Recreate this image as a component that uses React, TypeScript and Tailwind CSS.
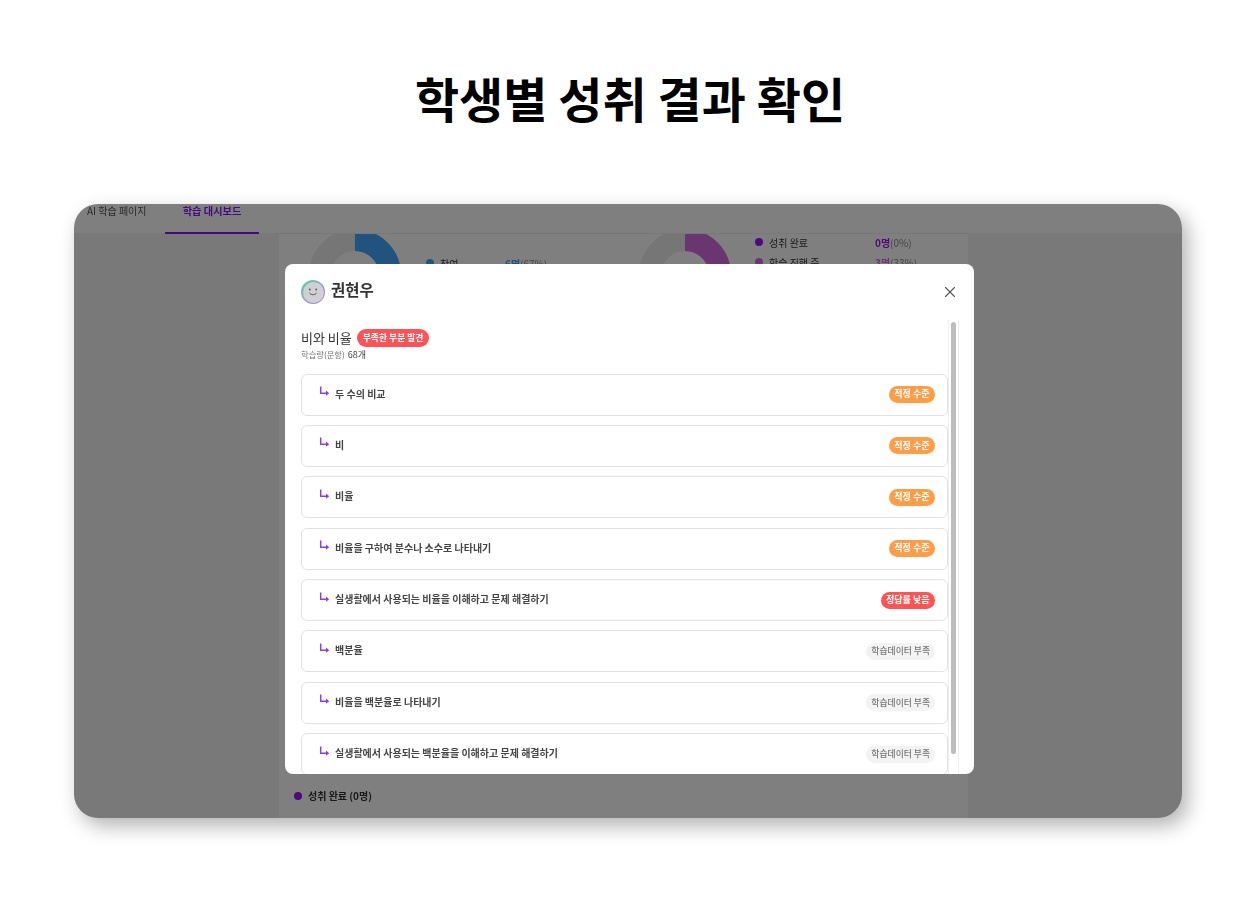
import React from "react";
import { X } from "lucide-react";

type Level = "ok" | "low" | "none";

const rows: { name: string; level: Level }[] = [
  { name: "두 수의 비교", level: "ok" },
  { name: "비", level: "ok" },
  { name: "비율", level: "ok" },
  { name: "비율을 구하여 분수나 소수로 나타내기", level: "ok" },
  { name: "실생활에서 사용되는 비율을 이해하고 문제 해결하기", level: "low" },
  { name: "백분율", level: "none" },
  { name: "비율을 백분율로 나타내기", level: "none" },
  { name: "실생활에서 사용되는 백분율을 이해하고 문제 해결하기", level: "none" },
];

const Badge = ({ level }: { level: Level }) => {
  if (level === "ok") {
    return (
      <span className="flex h-[17px] items-center rounded-full bg-[#ff9d47] px-[5.5px] pb-[1px] text-[9px] font-bold text-white">
        적정 수준
      </span>
    );
  }
  if (level === "low") {
    return (
      <span className="flex h-[17px] items-center rounded-full bg-[#ff5252] px-[5.5px] pb-[1px] text-[9px] font-bold text-white">
        정답률 낮음
      </span>
    );
  }
  return (
    <span className="flex h-[17px] items-center rounded-full bg-[#f3f3f3] px-[5px] pb-[1px] text-[8.8px] font-medium text-[#777777]">
      학습데이터 부족
    </span>
  );
};

const ChildArrow = () => (
  <svg width="11" height="11" viewBox="0 0 11 11" fill="none" className="mb-[3px] shrink-0">
    <path d="M1.7 0.5 V7.2 H8" stroke="#8f3de0" strokeWidth="1.5" />
    <path d="M7 4.6 L10.2 7.2 L7 9.8 Z" fill="#8f3de0" />
  </svg>
);

const Donut = ({ color, percent }: { color: string; percent: number }) => {
  const c = 2 * Math.PI * 35;
  return (
    <svg width="92" height="92" viewBox="0 0 92 92" className="shrink-0">
      <circle cx="46" cy="46" r="35" fill="none" stroke="#ececec" strokeWidth="22" />
      <circle
        cx="46"
        cy="46"
        r="35"
        fill="none"
        stroke={color}
        strokeWidth="22"
        strokeDasharray={`${(c * percent) / 100} ${c}`}
        transform="rotate(-90 46 46)"
      />
    </svg>
  );
};

const LegendRow = ({
  dot,
  label,
  count,
  rate,
  countClass,
  labelWidth,
}: {
  dot: string;
  label: string;
  count: string;
  rate: string;
  countClass: string;
  labelWidth: string;
}) => (
  <div className="flex h-[20px] items-center text-[10px] text-[#333333]">
    <span className={`mr-[6px] h-[8px] w-[8px] rounded-full ${dot}`} />
    <span className={labelWidth}>{label}</span>
    <span className={`font-bold ${countClass}`}>{count}</span>
    <span className="text-[#888888]">{rate}</span>
  </div>
);

const Avatar = () => (
  <div className="flex h-[24px] w-[24px] items-center justify-center rounded-full bg-gradient-to-br from-[#3fd6a0] to-[#b06ae8]">
    <div className="flex h-[21px] w-[21px] items-center justify-center rounded-full bg-[#cfcfd4]">
      <svg width="14" height="10" viewBox="0 0 14 10" fill="none">
        <circle cx="3.8" cy="2.5" r="0.9" fill="#555555" />
        <circle cx="10.2" cy="2.5" r="0.9" fill="#555555" />
        <path d="M3.5 6 C5 8.4 9 8.4 10.5 6" stroke="#555555" strokeWidth="0.9" strokeLinecap="round" />
      </svg>
    </div>
  </div>
);

const Modal = () => (
  <div className="flex h-[510px] w-[689px] flex-col overflow-hidden rounded-[8px] bg-white">
    <div className="flex h-[56px] shrink-0 items-center justify-between pl-[16px] pr-[15px]">
      <div className="flex items-center gap-[6px]">
        <Avatar />
        <span className="mb-[4px] text-[15.5px] font-bold text-[#333333]">권현우</span>
      </div>
      <X size={18} strokeWidth={1.5} className="text-[#555555]" />
    </div>
    <div className="flex min-h-0 flex-1 pl-[16px] pr-[15px]">
      <div className="min-w-0 flex-1">
        <div className="mt-[9px] flex h-[18px] items-center gap-[5.5px]">
          <span className="text-[13px] text-[#333333]">비와 비율</span>
          <span className="flex h-[18px] items-center rounded-full bg-[#ff5257] px-[5.5px] text-[8.8px] font-bold text-white">
            부족한 부분 발견
          </span>
        </div>
        <div className="mt-[1px] flex h-[14px] items-baseline gap-[3px]">
          <span className="text-[8.3px] text-[#777777]">학습량(문항)</span>
          <span className="text-[9px] text-[#444444]">68개</span>
        </div>
        <div className="mt-[11.5px] flex flex-col gap-[9.4px]">
          {rows.map((row) => (
            <div
              key={row.name}
              className="flex h-[42px] shrink-0 items-center justify-between rounded-[6px] border border-[#e2e2e2] pl-[17px] pr-[12px]"
            >
              <div className="mb-[3px] flex items-center gap-[5px]">
                <ChildArrow />
                <span className="text-[10px] font-bold text-[#444444]">{row.name}</span>
              </div>
              <Badge level={row.level} />
            </div>
          ))}
        </div>
      </div>
      <div className="w-[11px] shrink-0 border-x border-[#eeeeee] px-[2px] pt-[2px]">
        <div className="h-[432px] rounded-full bg-[#bdbdbd]" />
      </div>
    </div>
  </div>
);

export default function App() {
  return (
    <div className="min-h-[920px] bg-white font-['Noto_Sans_CJK_KR','Noto_Sans',sans-serif]">
      <div className="flex h-[204px] justify-center pt-[61px]">
        <h1 className="text-[48px] font-bold leading-[72px] text-black">학생별 성취 결과 확인</h1>
      </div>
      <div className="relative mx-[74px] flex h-[614px] w-[1108px] flex-col overflow-hidden rounded-[24px] bg-[#f2f2f2] shadow-[6px_8px_20px_rgba(0,0,0,0.3)] blur-[0.3px]">
        <div className="flex h-[30px] shrink-0 items-start border-b border-[#f0f0f0] bg-white text-[10px]">
          <div className="ml-[13px] w-[78px] leading-[13px] text-[#555555]">AI 학습 페이지</div>
          <div className="flex h-[30px] w-[94px] justify-center border-b-[2px] border-[#8a14ff] text-[10.2px] leading-[13px] font-bold text-[#8a14ff]">
            학습 대시보드
          </div>
        </div>
        <div className="ml-[205px] flex min-h-0 w-[689px] flex-1 flex-col overflow-hidden bg-white">
          <div className="-mt-[5px] flex">
            <div className="ml-[30px] flex items-start">
              <Donut color="#40a8ff" percent={67} />
              <div className="ml-[25px] mt-[24px] w-[200px]">
                <LegendRow
                  dot="bg-[#40a8ff]"
                  label="참여"
                  count="6명"
                  rate="(67%)"
                  countClass="text-[#40a8ff]"
                  labelWidth="w-[65px]"
                />
              </div>
            </div>
            <div className="ml-[13px] flex items-start">
              <Donut color="#d46ae0" percent={33} />
              <div className="ml-[24px] mt-[3px] w-[200px]">
                <LegendRow
                  dot="bg-[#a40eff]"
                  label="성취 완료"
                  count="0명"
                  rate="(0%)"
                  countClass="text-[#a40eff]"
                  labelWidth="w-[106px]"
                />
                <LegendRow
                  dot="bg-[#d46ae0]"
                  label="학습 진행 중"
                  count="3명"
                  rate="(33%)"
                  countClass="text-[#d46ae0]"
                  labelWidth="w-[106px]"
                />
              </div>
            </div>
          </div>
          <div className="mt-auto mb-[15px] ml-[15px] flex items-center gap-[6px] text-[10px] font-bold text-[#333333]">
            <span className="h-[8px] w-[8px] rounded-full bg-[#a40eff]" />
            성취 완료 (0명)
          </div>
        </div>
        <div className="absolute inset-0 flex items-start justify-start bg-black/50 pl-[211px] pt-[60px]">
          <Modal />
        </div>
      </div>
    </div>
  );
}
